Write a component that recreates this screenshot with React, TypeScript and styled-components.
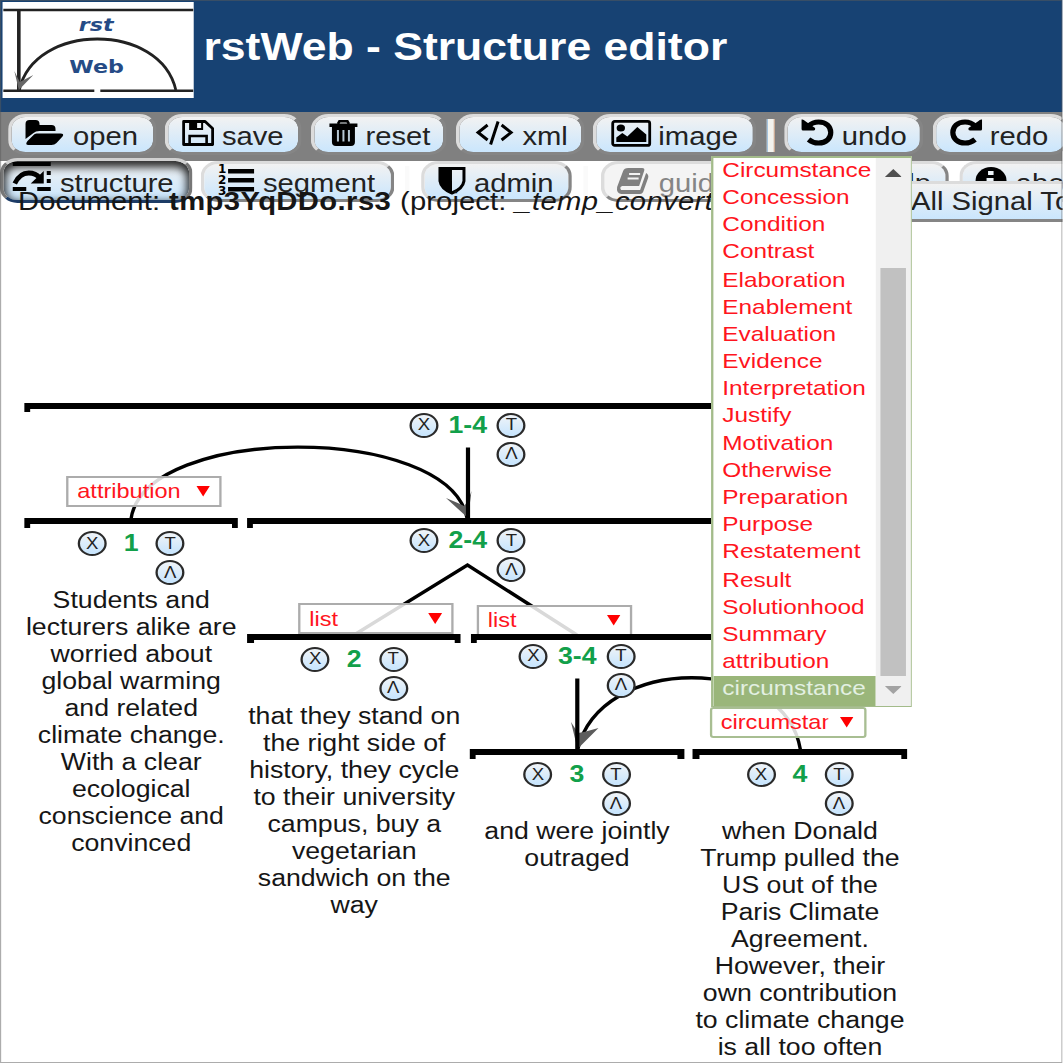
import React from "react";
import styled, { createGlobalStyle, css } from "styled-components";

/* The editor is shown horizontally stretched; u() converts a screen width to a layout width. */
const K = 1.16;
const u = (n: number) => `${n / K}px`;

const Global = createGlobalStyle`
  html, body { margin: 0; padding: 0; background: #fff; overflow: hidden; }
`;

const Page = styled.div`
  position: relative;
  width: ${u(1063)};
  height: 1063px;
  overflow: hidden;
  transform: scaleX(${K});
  transform-origin: 0 0;
  background: #fff;
  color: #161616;
  font-family: "Liberation Sans", Arial, sans-serif;
  font-size: 23px;
`;

const Frame = styled.div`
  position: absolute;
  inset: 0;
  border: 1px solid rgba(90, 90, 90, 0.5);
  pointer-events: none;
`;

const Header = styled.header`
  display: flex;
  align-items: flex-start;
  gap: ${u(9.5)};
  height: 112px;
  box-sizing: border-box;
  padding: 2px 0 0 ${u(2)};
  background: #174273;
`;

const Title = styled.h1`
  margin: 0;
  padding-top: 22.5px;
  font-size: 38.4px;
  line-height: 44px;
  color: #fff;
  white-space: nowrap;
`;

const Toolbar = styled.div<{ $second?: boolean }>`
  display: flex;
  align-items: flex-start;
  height: ${(p) => (p.$second ? 25 : 49)}px;
  box-sizing: border-box;
  padding-top: ${(p) => (p.$second ? 0 : 2)}px;
  background: ${(p) => (p.$second ? "transparent" : "#808080")};
`;

const ToolButton = styled.button<{
  $w: number;
  $before: number;
  $inset: number;
  $gap: number;
  $pressed?: boolean;
}>`
  display: flex;
  flex: none;
  align-items: center;
  box-sizing: border-box;
  width: ${(p) => u(p.$w)};
  height: 41px;
  margin: 0 0 0 ${(p) => u(p.$before)};
  padding: 3px 0 0 ${(p) => u(p.$inset - 3.5)};
  gap: ${(p) => u(p.$gap)};
  border: 3px solid;
  border-color: #dcdcdc #858585 #858585 #dcdcdc;
  border-radius: 15px;
  background: linear-gradient(#f2f2f2, #cae6fd) padding-box;
  font: 25.2px/30px "Liberation Sans", Arial, sans-serif;
  color: #222;
  white-space: nowrap;
  ${(p) =>
    p.$pressed &&
    css`
      height: 45px;
      margin-top: -3px;
      padding-top: 5px;
      border-color: #d0d0d0 #777 #1d3c66 #777;
      box-shadow: inset 0 4px 8px 2px rgba(0, 0, 0, 0.85);
    `}
  &:disabled {
    background: #f4f4f4;
    color: #858585;
  }
  ${Toolbar} & {
    position: relative;
  }
`;

const Separator = styled.span<{ $before: number; $faint?: boolean }>`
  flex: none;
  width: ${(p) => u(p.$faint ? 5 : 8)};
  height: 33px;
  margin: 5px 0 0 ${(p) => u(p.$before)};
  background: ${(p) => (p.$faint ? "#fafafa" : "#f3f3ee")};
  ${(p) =>
    !p.$faint &&
    "border-left: 1.5px solid #9fc0dc; border-right: 1.5px solid #c9a58c; box-sizing: border-box;"}
`;

const DocLine = styled.div`
  position: relative;
  padding-left: ${u(18)};
  font-size: 25.2px;
  line-height: 30px;
  letter-spacing: 0.08px;
  word-spacing: 0.6px;
  white-space: nowrap;
  & b { letter-spacing: 0.34px; }
  & i { letter-spacing: 0.3px; }
`;

const SignalButton = styled.button`
  position: absolute;
  left: ${u(880)};
  top: 180.5px;
  width: ${u(260)};
  height: 41px;
  padding: 0 0 0 ${u(27.5)};
  box-sizing: border-box;
  border: 3px solid;
  border-color: #dcdcdc #858585 #858585 #dcdcdc;
  background: linear-gradient(#f2f2f2, #cae6fd);
  font: 25.2px/30px "Liberation Sans", Arial, sans-serif;
  color: #222;
  text-align: left;
  white-space: nowrap;
`;

const Lines = styled.svg`
  position: absolute;
  left: 0;
  top: 0;
  width: ${u(1063)};
  height: 1063px;
  pointer-events: none;
`;

/* One discourse node on the canvas: its span bar, its controls and its text flow downwards. */
const NodeBox = styled.section<{ $x: number; $y: number; $w: number }>`
  position: absolute;
  left: ${(p) => u(p.$x)};
  top: ${(p) => p.$y}px;
  display: flex;
  flex-direction: column;
  align-items: center;
  width: ${(p) => u(p.$w)};
`;

const Bar = styled.div`
  display: flex;
  align-self: stretch;
  justify-content: space-between;
  height: 10px;
  box-sizing: border-box;
  border-top: 6px solid #000;
  &::before,
  &::after {
    content: "";
    width: ${u(6)};
    height: 3.5px;
    background: #000;
  }
`;

const Controls = styled.div<{ $indent?: number }>`
  display: grid;
  grid-template-columns: ${u(29)} ${(p) => u(p.$indent ? 58.5 : 49)} ${u(29)};
  grid-template-rows: 25px 25px;
  row-gap: 4px;
  ${(p) =>
    p.$indent
      ? `align-self: flex-start; padding-left: ${p.$indent / K}px;`
      : "padding-top: 3px;"}
`;

const Round = styled.button<{ $below?: boolean }>`
  display: flex;
  align-items: center;
  justify-content: center;
  box-sizing: border-box;
  width: 25px;
  height: 25px;
  padding: 0;
  border: 2px solid #2a2a2a;
  border-radius: 50%;
  background: linear-gradient(#f0f4f8, #c6e4fd);
  font: 16px/20px "Liberation Sans", Arial, sans-serif;
  color: #222;
  ${(p) => p.$below && "grid-column: 3;"}
`;

const NodeId = styled.span`
  font-weight: bold;
  line-height: 25px;
  text-align: center;
  color: #12a04a;
`;

const Segment = styled.p`
  margin: 0;
  padding-top: 2px;
  line-height: 27px;
  text-align: center;
  white-space: pre;
`;

const Relation = styled.div<{ $x: number; $y: number; $open?: boolean }>`
  position: absolute;
  left: ${(p) => u(p.$x)};
  top: ${(p) => p.$y}px;
  display: flex;
  align-items: center;
  justify-content: space-between;
  box-sizing: border-box;
  width: ${(p) => u(p.$open ? 157 : 155.5)};
  height: 31px;
  padding: 0 ${(p) => u(p.$open ? 11 : 9.5)} 0 ${u(8.5)};
  border: 2px solid ${(p) => (p.$open ? "#a8be92" : "#acacac")};
  border-radius: ${(p) => (p.$open ? 3 : 0)}px;
  background: rgba(255, 255, 255, 0.85);
  color: #ff1420;
  font-size: 20.3px;
  line-height: 26px;
`;

const RelationName = styled.span`
  width: ${u(107)};
  overflow: hidden;
  white-space: nowrap;
`;

const Triangle = styled.i<{ $color: string; $up?: boolean; $w: number; $h: number }>`
  flex: none;
  width: ${(p) => u(p.$w)};
  height: ${(p) => p.$h}px;
  background: ${(p) => p.$color};
  clip-path: ${(p) => (p.$up ? "polygon(0 100%, 50% 0, 100% 100%)" : "polygon(0 0, 100% 0, 50% 100%)")};
`;

const Dropdown = styled.div`
  position: absolute;
  left: ${u(711)};
  top: 156px;
  display: flex;
  box-sizing: border-box;
  width: ${u(200.5)};
  height: 550.5px;
  border: 2px solid #a3bb8a;
  border-width: 2px 1px 1px 2px;
  background: #fff;
`;

const Options = styled.ul`
  flex: 1;
  margin: 0;
  padding: 0;
  list-style: none;
  overflow: hidden;
`;

const Option = styled.li<{ $shift?: boolean; $active?: boolean }>`
  height: ${(p) => (p.$active ? 31 : 27)}px;
  margin-top: ${(p) => (p.$shift ? 1.5 : 0)}px;
  padding-left: ${u(9)};
  font-size: 21px;
  line-height: 23.4px;
  color: ${(p) => (p.$active ? "#e3f0e2" : "#ff1420")};
  background: ${(p) => (p.$active ? "#9ab67a" : "transparent")};
`;

const Scroll = styled.div`
  display: flex;
  flex-direction: column;
  align-items: center;
  box-sizing: border-box;
  width: ${u(34)};
  padding-top: 11px;
  background: #f0f0f0;
`;

const Thumb = styled.div`
  width: ${u(25)};
  height: 408px;
  margin: 91px 0 10px;
  background: #c1c1c1;
`;

const IconSvg = styled.svg<{ $w: number; $h: number; $lift: number }>`
  flex: none;
  width: ${(p) => u(p.$w)};
  height: ${(p) => p.$h}px;
  overflow: visible;
  margin-bottom: ${(p) => p.$lift}px;
`;

const icon = (w: number, h: number, lift: number, body: React.ReactNode) => (
  <IconSvg $w={w} $h={h} $lift={lift} viewBox={`0 0 ${w} ${h}`} preserveAspectRatio="none" fill="#000">
    {body}
  </IconSvg>
);

const icons = {
  open: icon(38, 25, 8, (
    <>
      <path d="M0 19V4Q0 0 4 0H10Q14 0 14 4V5H26Q30 5 30 9V11H14Q10 11 8 13Z" />
      <path d="M11 13.500H35Q39 13.500 37 16.500L31 23Q29 25 26 25H3Q-1 25 2 21L8 15Q9 13.500 11 13.500Z" />
    </>
  )),
  save: icon(32, 26, 6, (
    <>
      <path d="M1.500 1.500H23L30.500 8.500V24.500H1.500Z" fill="none" stroke="#000" strokeWidth="2.800" strokeLinejoin="round" />
      <path d="M7 1H21V10H7Z" />
      <path d="M15 3H19V8H15Z" fill="#eef3f8" />
      <path d="M7.500 24V16H24.500V24" fill="none" stroke="#000" strokeWidth="2.600" />
    </>
  )),
  reset: icon(28, 26, 7, (
    <>
      <path d="M8.500 4L10 1.300H18L19.500 4" fill="none" stroke="#000" strokeWidth="2.600" />
      <path d="M0 3.500H28V7H0ZM2.500 7H25.500V22Q25.500 26 21.500 26H6.500Q2.500 26 2.500 22Z" />
      <path d="M8.500 10V21.500M14 10V21.500M19.500 10V21.500" fill="none" stroke="#b5c6d3" strokeWidth="2" />
    </>
  )),
  xml: icon(38, 24, 6, (
    <path d="M12 4L2.500 11.500L12 19M26 4L35.500 11.500L26 19M22.500 0.500L15 23.500" fill="none" stroke="#000" strokeWidth="3" />
  )),
  image: icon(40, 27, 6, (
    <>
      <rect x="1.400" y="1.400" width="37" height="24" rx="2" fill="none" stroke="#000" strokeWidth="2.800" />
      <ellipse cx="9.500" cy="8" rx="4.200" ry="3.600" />
      <path d="M5 22V17.500L11 13L16 16.500L26 7L35 14.500V22Z" />
    </>
  )),
  undo: icon(32, 27, 7, (
    <>
      <path d="M7 7Q11 3 17 3C25 3 29.200 8 29.200 13.500S25 24 17 24Q11 24 7 20.500" fill="none" stroke="#000" strokeWidth="5.200" />
      <path d="M0 0.500Q2 0 3.500 2L13.500 9Q14 11.500 12 11.500H1.500Q0 11.500 0 10Z" />
    </>
  )),
  redo: icon(32, 27, 7, (
    <>
      <path d="M25 7Q21 3 15 3C7 3 2.800 8 2.800 13.500S7 24 15 24Q21 24 25 20.500" fill="none" stroke="#000" strokeWidth="5.200" />
      <path d="M32 0.500Q30 0 28.500 2L18.500 9Q18 11.500 20 11.500H30.500Q32 11.500 32 10Z" />
    </>
  )),
  structure: icon(38, 29, 13, (
    <>
      <path d="M0 0H38V4H0ZM0 25H13.500V29H0ZM24.500 25H38V29H24.500ZM34 9H38V13H34ZM34 17H38V21H34Z" />
      <path d="M2 21.500Q7 11 16 11Q23 11 27 16" fill="none" stroke="#000" strokeWidth="4.800" />
      <path d="M31 9V21.500H18Z" />
    </>
  )),
  segment: icon(36, 29, 8, (
    <>
      <path d="M10 4H36V8.500H10ZM10 13H36V17.500H10ZM10 22H36V26.500H10Z" />
      <g fontFamily="DejaVu Sans" fontWeight="bold" fontSize="12">
        <text x="0" y="8">1</text>
        <text x="0" y="19">2</text>
        <text x="0" y="30">3</text>
      </g>
    </>
  )),
  admin: icon(27, 28, 5, (
    <>
      <path d="M1.500 1.500H25.500V14Q24.500 21.500 13.500 26Q2.500 21.500 1.500 14Z" fill="none" stroke="#000" strokeWidth="3" />
      <path d="M1 1H13.500V27Q1 21 1 14Z" />
    </>
  )),
  guide: icon(32, 26, 5, (
    <g fill="#808080">
      <path d="M11 0H25Q28 0 27 3L22 18H5Q2 19 4 22H23L29 5Q32 7 31 10L26 24Q25 26 23 26H4Q-1 25 0 19L6 3Q7 0 11 0Z" />
      <path d="M12 6H23M10.500 10.500H21.500" stroke="#f4f4f4" strokeWidth="2" />
    </g>
  )),
  about: icon(31, 28, 4, (
    <>
      <ellipse cx="15.500" cy="14" rx="15.500" ry="14" />
      <path d="M12.500 4H18V8H12.500ZM11 11H18V20H20V23H11V20H13V14H11Z" fill="#eef4f9" />
    </>
  )),
  help: icon(31, 28, 4, <ellipse cx="15.500" cy="14" rx="15.500" ry="14" />),
};

const Logo = () => (
  <svg width={192 / K} height={96} viewBox="2 2 192 96" preserveAspectRatio="none">
    <rect x="2" y="2" width="192" height="96" fill="#fff" />
    <g fill="none" stroke="#222">
      <path d="M3 10H193" strokeWidth="2.600" />
      <path d="M3 90.800H94M100 90.800H193" strokeWidth="2.600" />
      <path d="M18.500 10V90" strokeWidth="3.600" />
      <path d="M19 90C34 22 160 22 175.500 90" strokeWidth="2.800" />
    </g>
    <path d="M14 71L19.500 82L33 75L18.500 90Z" fill="#666" />
    <g fill="#254b86" fontFamily="DejaVu Sans, sans-serif" fontWeight="bold" fontSize="18.500">
      <text transform="translate(78.500 30.800) scale(1.2 1)" fontStyle="italic">rst</text>
      <text transform="translate(69 73) scale(1.2 1)">Web</text>
    </g>
  </svg>
);

type Tool = {
  name: keyof typeof icons;
  w: number;
  before: number;
  inset: number;
  gap: number;
  pressed?: boolean;
  disabled?: boolean;
};

const Tools = ({ items }: { items: Tool[] }) => (
  <>
    {items.map((t) => (
      <ToolButton key={t.name} $w={t.w} $before={t.before} $inset={t.inset} $gap={t.gap} $pressed={t.pressed} disabled={t.disabled}>
        {icons[t.name]}
        {t.name}
      </ToolButton>
    ))}
  </>
);

type NodeData = { id: string; x: number; y: number; w: number; indent?: number; text?: string };

const nodes: NodeData[] = [
  { id: "1-4", x: 24.5, y: 402.5, w: 882, indent: 385 },
  { id: "2-4", x: 247, y: 518, w: 660, indent: 162.5 },
  { id: "3-4", x: 470.5, y: 633.5, w: 437, indent: 48.5 },
  {
    id: "1", x: 24.5, y: 518, w: 213.5,
    text: "Students and\nlecturers alike are\nworried about\nglobal warming\nand related\nclimate change.\nWith a clear\necological\nconscience and\nconvinced",
  },
  {
    id: "2", x: 247.5, y: 633.5, w: 213.5,
    text: "that they stand on\nthe right side of\nhistory, they cycle\nto their university\ncampus, buy a\nvegetarian\nsandwich on the\nway",
  },
  { id: "3", x: 470, y: 749, w: 214, text: "and were jointly\noutraged" },
  {
    id: "4", x: 693, y: 749, w: 214,
    text: "when Donald\nTrump pulled the\nUS out of the\nParis Climate\nAgreement.\nHowever, their\nown contribution\nto climate change\nis all too often",
  },
];

const relations = [
  { name: "attribution", x: 66.5, y: 475.5 },
  { name: "list", x: 298.5, y: 603 },
  { name: "list", x: 477, y: 604.5 },
  { name: "circumstance", x: 710, y: 706.5, open: true },
];

const options = [
  "Circumstance", "Concession", "Condition", "Contrast", "Elaboration", "Enablement", "Evaluation",
  "Evidence", "Interpretation", "Justify", "Motivation", "Otherwise", "Preparation", "Purpose",
  "Restatement", "Result", "Solutionhood", "Summary", "attribution", "circumstance",
];
const shifted = ["Elaboration", "Motivation", "Result"];

export default function App() {
  return (
    <>
      <Global />
      <Page>
        <Header>
          <Logo />
          <Title>rstWeb - Structure editor</Title>
        </Header>
        <Toolbar>
          <Tools
            items={[
              { name: "open", w: 148, before: 8.5, inset: 17.5, gap: 9 },
              { name: "save", w: 137, before: 8.5, inset: 17, gap: 8 },
              { name: "reset", w: 135, before: 9.5, inset: 18, gap: 8 },
              { name: "xml", w: 128, before: 10, inset: 19, gap: 9 },
              { name: "image", w: 163, before: 8.5, inset: 18, gap: 7.5 },
            ]}
          />
          <Separator $before={11} />
          <Tools
            items={[
              { name: "undo", w: 139, before: 9, inset: 18, gap: 8 },
              { name: "redo", w: 136, before: 9.5, inset: 17.5, gap: 8 },
            ]}
          />
        </Toolbar>
        <Toolbar $second>
          <Tools
            items={[
              { name: "structure", w: 192, before: 0, inset: 13, gap: 9, pressed: true },
              { name: "segment", w: 193, before: 9, inset: 17, gap: 9 },
            ]}
          />
          <Separator $faint $before={11} />
          <Tools items={[{ name: "admin", w: 151, before: 11, inset: 18, gap: 8 }]} />
          <Separator $faint $before={11} />
          <Tools
            items={[
              { name: "guide", w: 150, before: 13, inset: 16, gap: 10, disabled: true },
              { name: "help", w: 150, before: 48, inset: 38, gap: 8 },
              { name: "about", w: 150, before: 10, inset: 17, gap: 9 },
            ]}
          />
        </Toolbar>
        <DocLine>
          Document: <b>tmp3YqDDo.rs3</b> (project: <i>_temp_convert</i>
        </DocLine>
        <SignalButton>All Signal Tokens</SignalButton>

        <Lines viewBox="0 0 1063 1063" preserveAspectRatio="none" fill="none" stroke="#000" strokeWidth="3.400">
          <path d="M131 519C145 423.300 449 423.300 467 518" />
          <path d="M446 498L459 503.500L464 506L468 501L471.500 491L468 518Z" fill="#5c5c5c" stroke="none" />
          <path d="M468 447.500V519" strokeWidth="4.200" />
          <path d="M354 635L467.500 565L577 635" />
          <path d="M577.500 750C600 653.700 785 653.700 800.500 750" />
          <path d="M571 722L578 733L584 732L598.500 728L577.500 749Z" fill="#5c5c5c" stroke="none" />
          <path d="M577.300 678.500V750" strokeWidth="4.200" />
        </Lines>

        {relations.map((r) => (
          <Relation key={r.x} $x={r.x} $y={r.y} $open={r.open}>
            <RelationName>{r.name}</RelationName>
            <Triangle $color="#ff0000" $w={14} $h={11} />
          </Relation>
        ))}

        {nodes.map((n) => (
          <NodeBox key={n.id} $x={n.x} $y={n.y} $w={n.w}>
            <Bar />
            <Controls $indent={n.indent}>
              <Round>X</Round>
              <NodeId>{n.id}</NodeId>
              <Round>T</Round>
              <Round $below>Λ</Round>
            </Controls>
            {n.text && <Segment>{n.text}</Segment>}
          </NodeBox>
        ))}

        <Dropdown>
          <Options>
            {options.map((o) => (
              <Option key={o} $shift={shifted.includes(o)} $active={o === "circumstance"}>
                {o}
              </Option>
            ))}
          </Options>
          <Scroll>
            <Triangle $up $color="#505050" $w={17} $h={8} />
            <Thumb />
            <Triangle $color="#a3a3a3" $w={17} $h={8} />
          </Scroll>
        </Dropdown>
        <Frame />
      </Page>
    </>
  );
}
